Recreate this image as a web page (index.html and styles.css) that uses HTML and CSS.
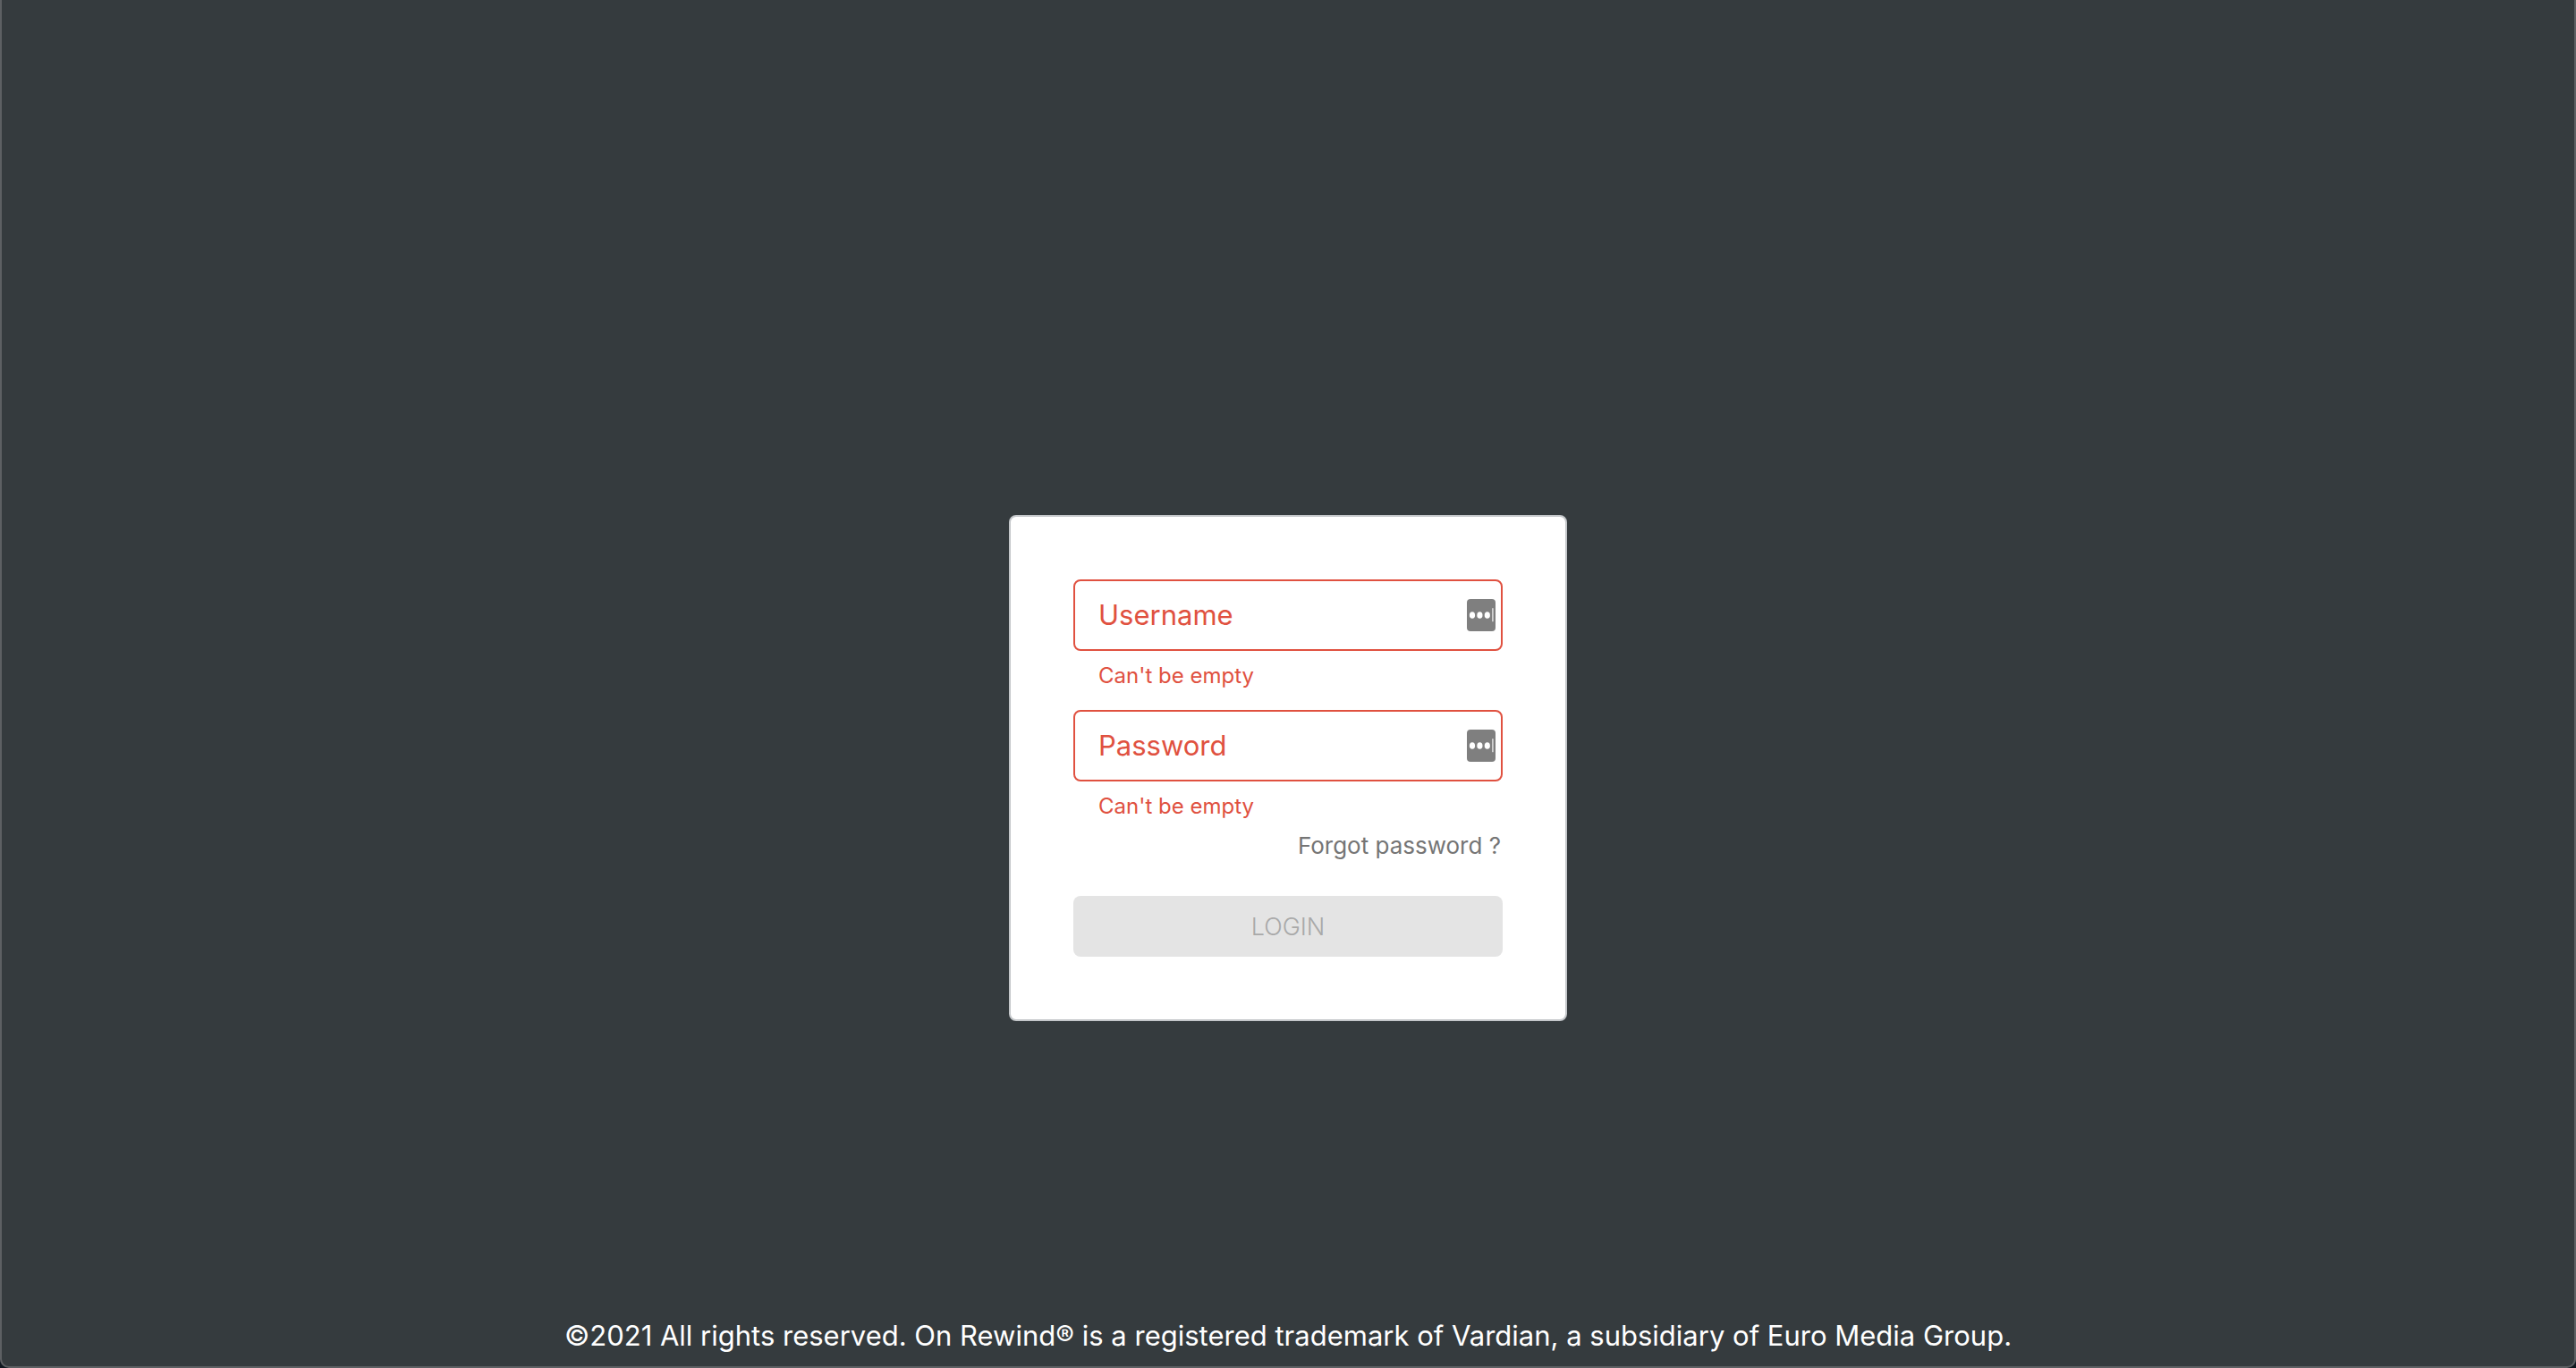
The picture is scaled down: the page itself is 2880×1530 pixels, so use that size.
FILE: index.html
```html
<!DOCTYPE html>
<html lang="en">
<head>
  <meta charset="utf-8">
  <meta name="viewport" content="width=device-width, initial-scale=1">
  <title>Login</title>
  <link rel="stylesheet" href="styles.css">
</head>
<body>
  <div class="page">
    <main class="content">
      <form class="card">
        <div class="field">
          <div class="control">
            <input class="input" id="username" type="text" autocomplete="username" aria-invalid="true" aria-describedby="username-error">
            <label class="label" for="username">Username</label>
            <svg class="fill-icon" viewBox="0 0 32 36" aria-hidden="true">
              <rect width="32" height="36" rx="4" fill="#7f7f7f"/>
              <g fill="#fff">
                <ellipse cx="6" cy="18" rx="3.1" ry="3.8"/>
                <ellipse cx="14.4" cy="18" rx="3.1" ry="3.8"/>
                <ellipse cx="22.8" cy="18" rx="3.1" ry="3.8"/>
              </g>
              <rect x="28.2" y="10.2" width="1.4" height="15" fill="#e6e6e6"/>
            </svg>
          </div>
          <p class="error" id="username-error">Can't be empty</p>
        </div>
        <div class="field">
          <div class="control">
            <input class="input" id="password" type="password" autocomplete="current-password" aria-invalid="true" aria-describedby="password-error">
            <label class="label" for="password">Password</label>
            <svg class="fill-icon" viewBox="0 0 32 36" aria-hidden="true">
              <rect width="32" height="36" rx="4" fill="#7f7f7f"/>
              <g fill="#fff">
                <ellipse cx="6" cy="18" rx="3.1" ry="3.8"/>
                <ellipse cx="14.4" cy="18" rx="3.1" ry="3.8"/>
                <ellipse cx="22.8" cy="18" rx="3.1" ry="3.8"/>
              </g>
              <rect x="28.2" y="10.2" width="1.4" height="15" fill="#e6e6e6"/>
            </svg>
          </div>
          <p class="error" id="password-error">Can't be empty</p>
        </div>
        <a class="forgot" href="#">Forgot password ?</a>
        <button class="login" type="submit" disabled>LOGIN</button>
      </form>
    </main>
    <footer class="footer">©2021 All rights reserved. On Rewind® is a registered trademark of Vardian, a subsidiary of Euro Media Group.</footer>
  </div>
</body>
</html>
```
FILE: styles.css
```css
*,
*::before,
*::after {
  box-sizing: border-box;
}

body {
  margin: 0;
  background: #101820;
  font-family: Inter, "Liberation Sans", sans-serif;
}

.page {
  display: flex;
  flex-direction: column;
  min-height: 100vh;
  border: 2px solid #5d6063;
  border-top: 0;
  border-radius: 0 0 10px 10px;
  background: #353b3e;
}

.content {
  flex: 1;
  display: flex;
  align-items: center;
  justify-content: center;
  padding: 244px 16px 0;
}

.card {
  display: flex;
  flex-direction: column;
  width: 100%;
  max-width: 624px;
  padding: 70px;
  border: 2px solid #c4c7ca;
  border-radius: 8px;
  background: #fff;
}

.field + .field {
  margin-top: 22px;
}

.control {
  display: grid;
  align-items: center;
}

.control > * {
  grid-area: 1 / 1;
}

.input {
  width: 100%;
  height: 80px;
  padding: 0 48px 0 26px;
  border: 2px solid #e05140;
  border-radius: 8px;
  background: #fff;
  color: #e05140;
  font: inherit;
  font-size: 31px;
}

.label {
  justify-self: start;
  padding-left: 28px;
  color: #e05140;
  font-size: 31px;
  line-height: 40px;
  pointer-events: none;
}

.fill-icon {
  justify-self: end;
  width: 32px;
  height: 36px;
  margin-right: 8px;
}

.error {
  margin: 12px 0 0;
  padding-left: 28px;
  color: #e05140;
  font-size: 24px;
  line-height: 32px;
}

.forgot {
  align-self: flex-end;
  margin: 12px 0 40px;
  padding-right: 2px;
  color: #757575;
  font-size: 26px;
  line-height: 32px;
  text-decoration: none;
}

.login {
  height: 68px;
  border: 0;
  border-radius: 8px;
  background: #e4e4e4;
  color: #a9a9a9;
  font-family: inherit;
  font-size: 27px;
  font-weight: 300;
}

.footer {
  padding: 0 16px 14px;
  color: #fff;
  font-size: 31px;
  line-height: 40px;
  text-align: center;
}
```
